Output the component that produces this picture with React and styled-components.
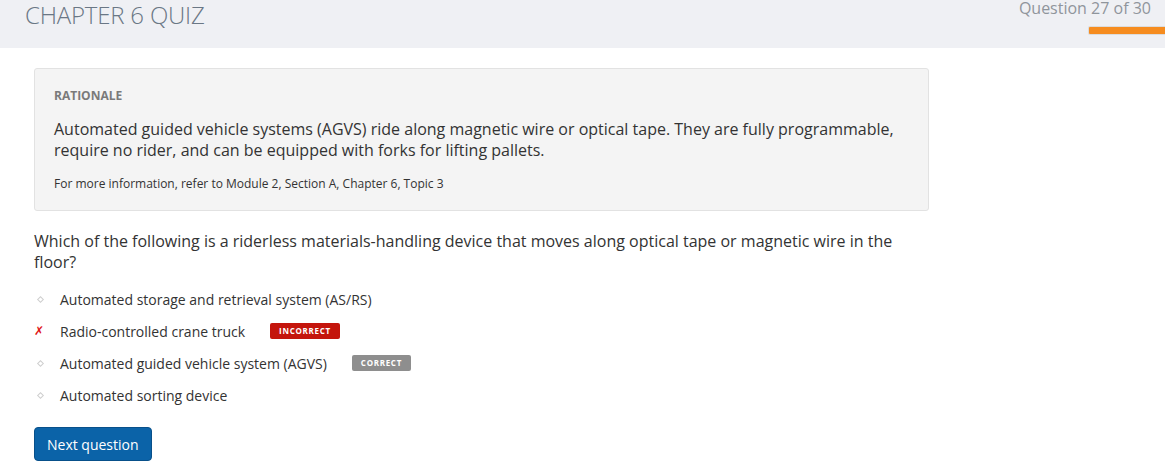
import styled, { createGlobalStyle } from "styled-components";

const GlobalStyle = createGlobalStyle`
  body {
    margin: 0;
    font-family: "Open Sans", "Liberation Sans", sans-serif;
    background: #ffffff;
    color: #333333;
  }
`;

const options = [
  { text: "Automated storage and retrieval system (AS/RS)" },
  { text: "Radio-controlled crane truck", wrong: true, badge: "INCORRECT" },
  { text: "Automated guided vehicle system (AGVS)", badge: "CORRECT" },
  { text: "Automated sorting device" },
];

const App = () => {
  return (
    <Page>
      <GlobalStyle />
      <Header>
        <Title>CHAPTER 6 QUIZ</Title>
        <Progress>
          <Counter>Question 27 of 30</Counter>
          <Bar />
        </Progress>
      </Header>
      <Content>
        <Rationale>
          <RationaleLabel>RATIONALE</RationaleLabel>
          <RationaleText>
            Automated guided vehicle systems (AGVS) ride along magnetic wire or
            optical tape. They are fully programmable, require no rider, and can
            be equipped with forks for lifting pallets.
          </RationaleText>
          <Reference>
            For more information, refer to Module 2, Section A, Chapter 6, Topic 3
          </Reference>
        </Rationale>
        <Question>
          Which of the following is a riderless materials-handling device that
          moves along optical tape or magnetic wire in the floor?
        </Question>
        <OptionList>
          {options.map((o) => (
            <Option key={o.text}>
              <Marker>
                {o.wrong ? <Cross>✗</Cross> : <Dot />}
              </Marker>
              <OptionText>{o.text}</OptionText>
              {o.badge && <Badge $wrong={o.wrong}>{o.badge}</Badge>}
            </Option>
          ))}
        </OptionList>
        <NextButton>Next question</NextButton>
      </Content>
    </Page>
  );
};

const Page = styled.div`
  width: 1165px;
  height: 464px;
  overflow: hidden;
`;

const Header = styled.header`
  height: 48px;
  background: #eff0f4;
  display: flex;
  justify-content: space-between;
  align-items: flex-start;
  padding: 0 0 0 25px;
`;

const Title = styled.h1`
  margin: 0;
  font-size: 24px;
  font-weight: 300;
  line-height: 30px;
  color: #6a7785;
  letter-spacing: -0.2px;
`;

const Progress = styled.div`
  display: flex;
  flex-direction: column;
  align-items: flex-end;
`;

const Counter = styled.div`
  font-size: 16px;
  line-height: 17px;
  padding-right: 14px;
  color: #8f959c;
`;

const Bar = styled.div`
  margin-top: 10px;
  width: 76px;
  height: 7px;
  background: #f68c1f;
  border-radius: 1px 0 0 1px;
  box-shadow: 0 0 0 1px #dcdcdc;
`;

const Content = styled.main`
  padding: 20px 0 0 34px;
  width: 895px;
`;

const Rationale = styled.section`
  background: #f4f4f4;
  border: 1px solid #e2e2e2;
  border-radius: 3px;
  padding: 19px 20px 18px 19px;
`;

const RationaleLabel = styled.div`
  font-size: 12px;
  font-weight: 700;
  color: #7a7a7a;
  line-height: 16px;
`;

const RationaleText = styled.p`
  margin: 15px 0 0;
  font-size: 16px;
  line-height: 21px;
  color: #333333;
`;

const Reference = styled.p`
  margin: 15px 0 0;
  font-size: 12px;
  line-height: 16px;
  color: #333333;
`;

const Question = styled.p`
  margin: 20px 0 0;
  font-size: 16px;
  line-height: 21px;
  color: #333333;
`;

const OptionList = styled.ul`
  list-style: none;
  margin: 10px 0 0;
  padding: 0;
`;

const Option = styled.li`
  display: flex;
  align-items: center;
  height: 32px;
`;

const Marker = styled.span`
  width: 26px;
  display: flex;
  align-items: center;
`;

const Dot = styled.span`
  width: 3px;
  height: 3px;
  margin-left: 4px;
  border: 1px solid #cfcfcf;
  transform: rotate(45deg);
`;

const Cross = styled.span`
  color: #e01515;
  font-size: 12px;
  font-weight: 700;
  font-style: italic;
  line-height: 1;
  font-family: "DejaVu Sans", sans-serif;
`;

const OptionText = styled.span`
  font-size: 14px;
  color: #333333;
`;

const Badge = styled.span`
  margin-left: 25px;
  padding: 0 9px;
  height: 16px;
  line-height: 16px;
  font-size: 8px;
  font-weight: 700;
  letter-spacing: 0.7px;
  color: #ffffff;
  border-radius: 2px;
  background: ${(p) => (p.$wrong ? "#c4150c" : "#8e8e8e")};
`;

const NextButton = styled.button`
  margin-top: 16px;
  font-family: inherit;
  font-size: 14px;
  color: #ffffff;
  background: #0b63a8;
  border: 1px solid #08508a;
  border-radius: 4px;
  padding: 0 12px;
  height: 34px;
  cursor: pointer;
`;

export default App;
